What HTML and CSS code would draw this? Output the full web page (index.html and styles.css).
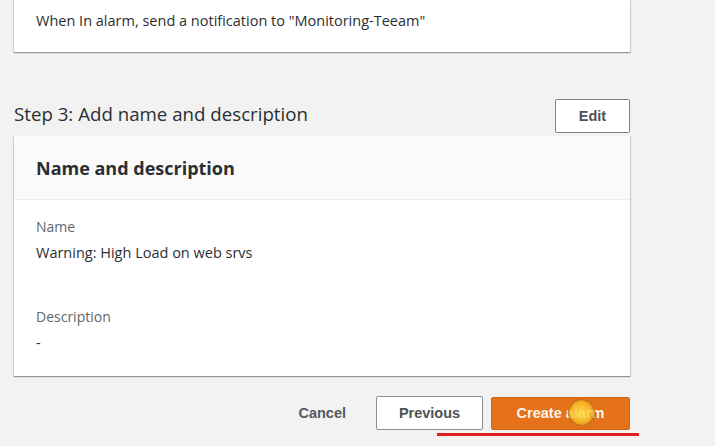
FILE: index.html
```html
<!DOCTYPE html>
<html>
<head>
<meta charset="utf-8">
<link rel="stylesheet" href="styles.css">
</head>
<body>
<div class="page">
  <div class="card card-top">
    <p class="summary">When In alarm, send a notification to "Monitoring-Teeam"</p>
  </div>

  <div class="step-head">
    <h2 class="step-title">Step 3: Add name and description</h2>
    <button class="btn btn-edit">Edit</button>
  </div>

  <div class="card card-main">
    <div class="card-header">
      <h3 class="card-title">Name and description</h3>
    </div>
    <div class="card-body">
      <div class="field">
        <div class="label">Name</div>
        <div class="value">Warning: High Load on web srvs</div>
      </div>
      <div class="field field-desc">
        <div class="label">Description</div>
        <div class="value">-</div>
      </div>
    </div>
  </div>

  <div class="actions">
    <button class="btn-link">Cancel</button>
    <button class="btn btn-prev">Previous</button>
    <button class="btn btn-primary">Create alarm</button>
    <span class="cursor"></span>
  </div>
  <div class="underline"></div>
</div>
</body>
</html>
```

FILE: styles.css
```css
* { box-sizing: border-box; }
html, body {
  margin: 0;
  padding: 0;
  background: #f2f2f2;
  font-family: "Open Sans", "Liberation Sans", Arial, sans-serif;
  color: #2b2f33;
}
.page {
  position: relative;
  width: 630px;
  padding-left: 14px;
  height: 446px;
}
.card {
  background: #fff;
  box-shadow: 0 1px 1px 0 rgba(0,28,36,0.25), 1px 1px 1px 0 rgba(0,28,36,0.12), -1px 1px 1px 0 rgba(0,28,36,0.12);
}
.card-top {
  height: 52px;
  padding: 12px 22px 0;
}
.summary {
  margin: 0;
  font-size: 14.5px;
  line-height: 18px;
}
.step-head {
  margin-top: 47px;
  height: 37px;
  display: flex;
  align-items: flex-start;
  justify-content: space-between;
}
.step-title {
  margin: 3px 0 0;
  font-size: 18.7px;
  font-weight: normal;
  line-height: 24px;
  color: #2b2f33;
}
.btn {
  font-family: "Liberation Sans", Arial, sans-serif;
  font-weight: bold;
  font-size: 14.5px;
  background: #fff;
  border: 1px solid #7d8185;
  border-radius: 2px;
  color: #4d5257;
  cursor: pointer;
}
.btn-edit {
  width: 75px;
  height: 34px;
  padding: 0;
}
.card-main {
  height: 240px;
}
.card-header {
  height: 64px;
  background: #fafafa;
  border-bottom: 1px solid #eaeded;
  padding: 20px 22px 0;
}
.card-title {
  margin: 0;
  font-size: 18px;
  line-height: 24px;
  font-weight: bold;
  color: #2b2f33;
}
.card-body {
  padding: 18px 22px 0;
}
.field { display: flex; flex-direction: column; gap: 8px; }
.field-desc { margin-top: 46px; }
.label {
  font-size: 14px;
  line-height: 18px;
  color: #5f666d;
}
.value {
  font-size: 14.5px;
  line-height: 18px;
  color: #2b2f33;
}
.actions {
  position: relative;
  margin-top: 20px;
  display: flex;
  justify-content: flex-end;
  align-items: center;
  height: 34px;
}
.btn-link {
  background: none;
  border: none;
  font-family: "Liberation Sans", Arial, sans-serif;
  font-weight: bold;
  font-size: 14.5px;
  color: #545b64;
  padding: 0;
  margin-right: 30px;
}
.btn-prev {
  width: 107px;
  height: 34px;
  margin-right: 8px;
  border-color: #8a8e92;
}
.btn-primary {
  width: 139px;
  height: 33px;
  background: #e5721a;
  border-color: #d3650f;
  color: #fdf3ea;
}
.cursor {
  position: absolute;
  left: 554px;
  top: 3px;
  width: 27px;
  height: 27px;
  border-radius: 50%;
  background: radial-gradient(circle, rgba(255,220,70,0.9) 0, rgba(250,195,45,0.8) 55%, rgba(215,130,20,0.7) 80%, rgba(200,120,20,0.3) 100%);
  border: 1px solid rgba(160,90,10,0.6);
}
.underline {
  position: absolute;
  left: 437px;
  top: 433px;
  width: 202px;
  height: 3px;
  background: #e21f1f;
  z-index: 5;
}
```
